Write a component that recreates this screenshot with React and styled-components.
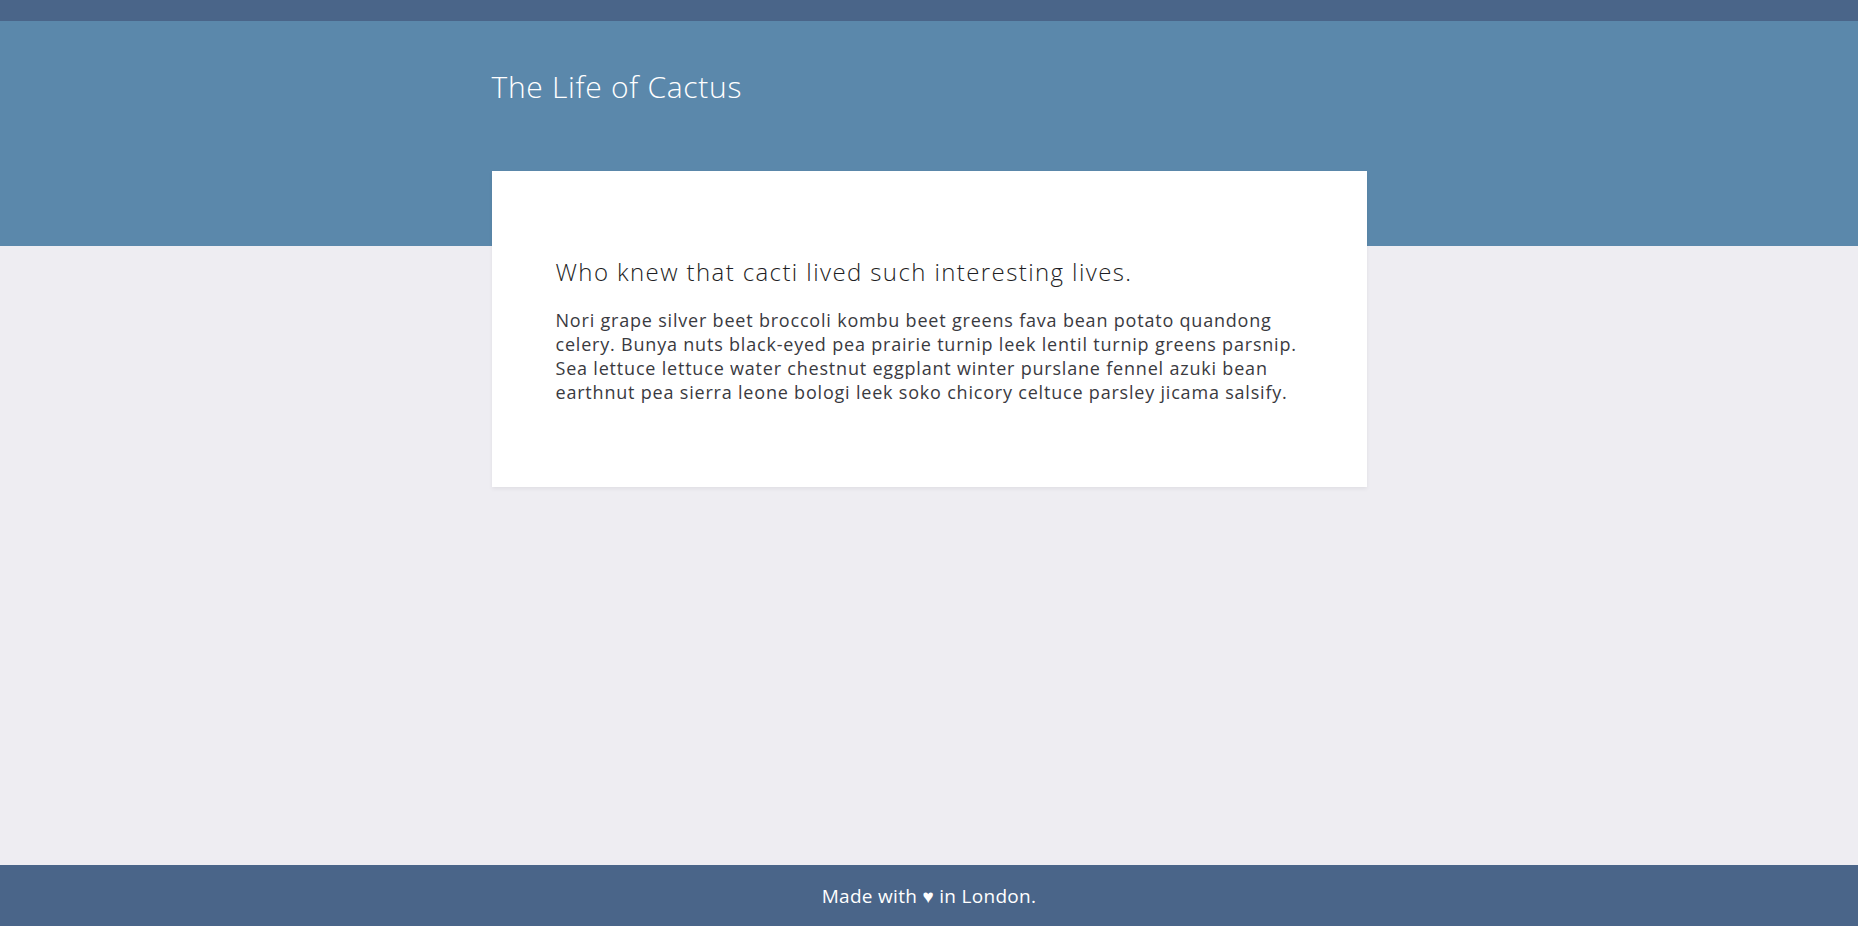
import React from 'react'
import styled, { createGlobalStyle } from 'styled-components'

const GlobalStyle = createGlobalStyle`
  html, body {
    margin: 0;
    padding: 0;
    background: #eeedf2;
    font-family: 'Open Sans', 'Lato', sans-serif;
    color: #333;
  }
`

function App() {
  return (
    <Page>
      <GlobalStyle />
      <TopBar />
      <Header>
        <Container>
          <Title>The Life of Cactus</Title>
        </Container>
      </Header>
      <Main>
        <Container>
          <Card>
            <Heading>Who knew that cacti lived such interesting lives.</Heading>
            <Text>
              Nori grape silver beet broccoli kombu beet greens fava bean potato quandong
              celery. Bunya nuts black-eyed pea prairie turnip leek lentil turnip greens parsnip.
              Sea lettuce lettuce water chestnut eggplant winter purslane fennel azuki bean
              earthnut pea sierra leone bologi leek soko chicory celtuce parsley jicama salsify.
            </Text>
          </Card>
        </Container>
      </Main>
      <Footer>Made with ♥ in London.</Footer>
    </Page>
  )
}

const Page = styled.div`
  min-height: 100vh;
  display: flex;
  flex-direction: column;
`

const TopBar = styled.div`
  height: 21px;
  background-color: #4a6589;
`

const Header = styled.header`
  height: 225px;
  background-color: #5b88ab;
`

const Container = styled.div`
  width: 875px;
  margin: 0 auto;
`

const Title = styled.h1`
  margin: 0;
  padding-top: 48px;
  font-size: 30px;
  line-height: 36px;
  font-weight: 300;
  letter-spacing: 0.7px;
  color: #fff;
`

const Main = styled.main`
  flex: 1;
`

const Card = styled.div`
  margin-top: -75px;
  background: #fff;
  padding: 86px 64px 83px;
  box-shadow: 0 2px 4px rgba(0, 0, 0, 0.06);
`

const Heading = styled.h2`
  margin: 0 0 21px;
  font-size: 24px;
  line-height: 30px;
  font-weight: 300;
  letter-spacing: 1.4px;
  color: #1e1e24;
`

const Text = styled.p`
  margin: 0;
  font-size: 18px;
  line-height: 24px;
  font-weight: 400;
  letter-spacing: 0.8px;
  color: #3a3a3f;
`

const Footer = styled.footer`
  height: 61px;
  display: flex;
  align-items: center;
  justify-content: center;
  background-color: #4a6589;
  color: #fff;
  font-size: 19px;
  letter-spacing: 0.3px;
`

export default App
